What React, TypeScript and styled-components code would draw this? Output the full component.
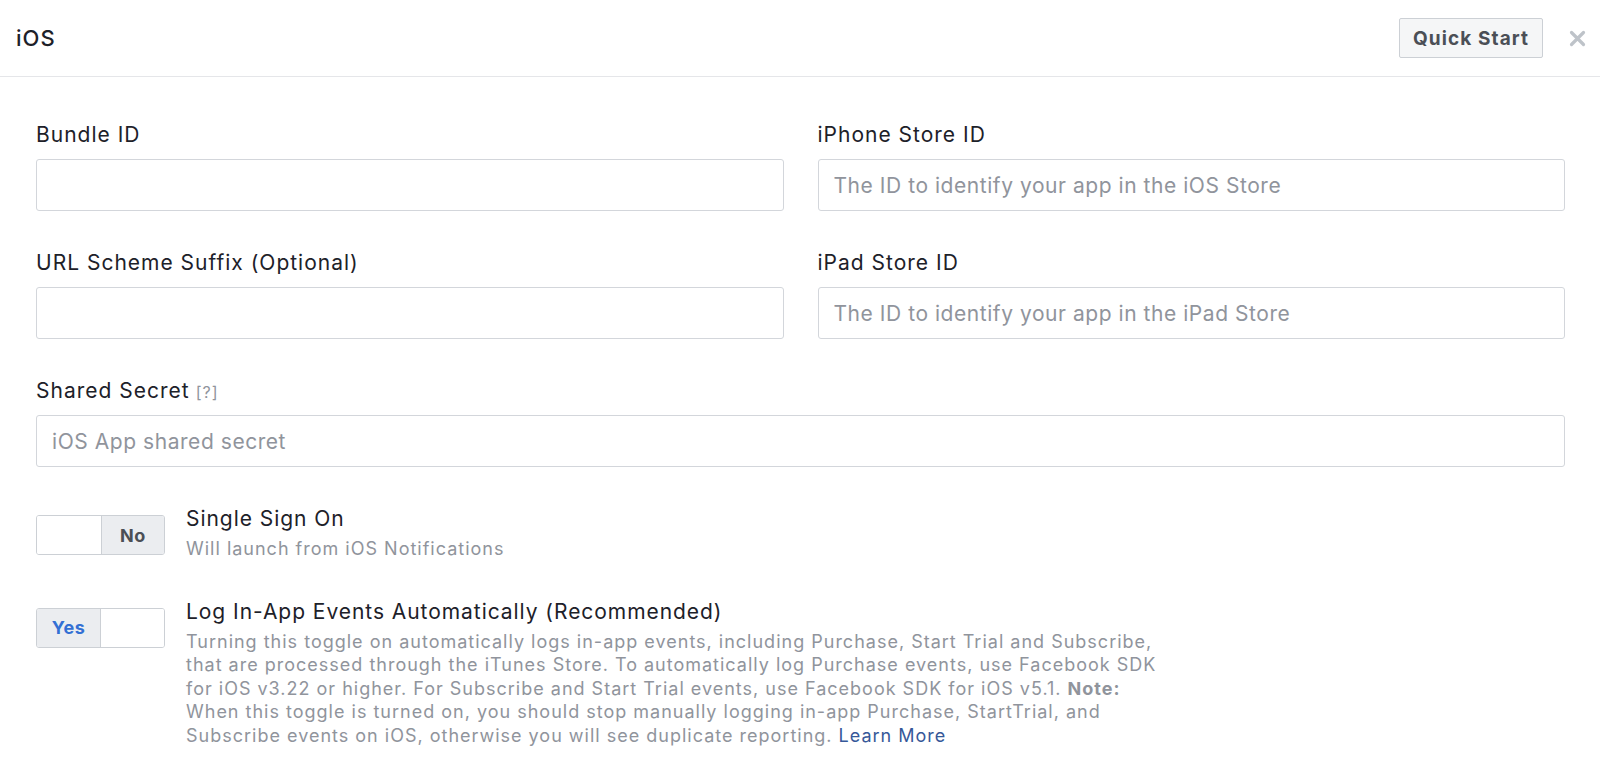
import React from 'react';
import styled, { createGlobalStyle } from 'styled-components';

const GlobalStyle = createGlobalStyle`
  html, body {
    margin: 0;
    padding: 0;
    background: #ffffff;
  }
  body {
    font-family: Inter, "Noto Sans", "Liberation Sans", sans-serif;
    color: #1d2129;
    -webkit-font-smoothing: antialiased;
  }
  * {
    box-sizing: border-box;
  }
`;

const Panel = styled.div`
  width: 1600px;
  min-height: 781px;
  background: #ffffff;
`;

const Header = styled.header`
  height: 77px;
  display: flex;
  align-items: center;
  justify-content: space-between;
  padding: 0 14px 0 16px;
  border-bottom: 1px solid #e5e6e9;
`;

const Title = styled.h2`
  margin: 0;
  font-size: 22px;
  font-weight: 500;
  letter-spacing: 1px;
  color: #1d2129;
`;

const HeaderActions = styled.div`
  display: flex;
  align-items: center;
  gap: 26px;
`;

const QuickStartButton = styled.button`
  height: 40px;
  width: 144px;
  padding: 0;
  border: 1px solid #ccd0d5;
  border-radius: 2px;
  background: #f5f6f7;
  font-family: inherit;
  font-size: 19px;
  font-weight: 700;
  letter-spacing: 1.1px;
  color: #4b4f56;
  cursor: pointer;
`;

const CloseButton = styled.button`
  border: 0;
  padding: 0;
  background: none;
  display: flex;
  cursor: pointer;
`;

const Body = styled.div`
  padding: 46px 35px 0 36px;
`;

const FieldGrid = styled.div`
  display: grid;
  grid-template-columns: 1fr 1fr;
  column-gap: 34px;
  row-gap: 40px;
`;

const Field = styled.div<{ $wide?: boolean }>`
  display: flex;
  flex-direction: column;
  gap: 12px;
  grid-column: ${(p) => (p.$wide ? '1 / -1' : 'auto')};
`;

const Label = styled.label`
  display: block;
  height: 24px;
  font-size: 21px;
  line-height: 24px;
  letter-spacing: 1px;
  color: #1d2129;
`;

const Hint = styled.span`
  font-size: 16px;
  line-height: 1;
  letter-spacing: 1px;
  color: #90949c;
  margin-left: 6px;
`;

const TextInput = styled.input`
  height: 52px;
  width: 100%;
  border: 1px solid #d3d6db;
  border-radius: 3px;
  padding: 0 15px;
  font-family: inherit;
  font-size: 21px;
  letter-spacing: 0.55px;
  color: #1d2129;
  outline: none;

  &::placeholder {
    color: #90949c;
  }
`;

const ToggleList = styled.div`
  display: flex;
  flex-direction: column;
  gap: 39px;
  margin-top: 40px;
`;

const ToggleRow = styled.div`
  display: flex;
  align-items: flex-start;
  gap: 21px;
`;

const Switch = styled.div`
  margin-top: 8px;
  width: 129px;
  height: 40px;
  display: flex;
  border: 1px solid #ccd0d5;
  border-radius: 3px;
  overflow: hidden;
  flex-shrink: 0;
`;

const SwitchHalf = styled.span<{ $active?: boolean; $on?: boolean }>`
  flex: ${(p) => (p.$active ? '0 0 63px' : '1')};
  display: flex;
  align-items: center;
  justify-content: center;
  background: ${(p) => (p.$active ? '#ebedf0' : '#ffffff')};
  color: ${(p) => (p.$on ? '#3370d4' : '#4b4f56')};
  font-size: 18px;
  font-weight: 700;
  letter-spacing: 0.5px;

  & + & {
    border-left: 1px solid #ccd0d5;
  }
`;

const ToggleText = styled.div`
  display: flex;
  flex-direction: column;
`;

const ToggleTitle = styled.div`
  font-size: 21px;
  line-height: 24px;
  letter-spacing: 0.95px;
  color: #1d2129;
`;

const ToggleDesc = styled.p`
  margin: 6px 0 0;
  font-size: 18px;
  line-height: 23.5px;
  letter-spacing: 1px;
  white-space: nowrap;
  color: #90949c;

  strong {
    font-weight: 700;
  }
`;

const LearnMore = styled.a`
  color: #365899;
  text-decoration: none;
`;

const CloseIcon = () => (
  <svg width="17" height="17" viewBox="0 0 17 17">
    <path d="M2.5 2.5 L14.5 14.5 M14.5 2.5 L2.5 14.5" stroke="#bec3c9" strokeWidth="3.2" strokeLinecap="round" />
  </svg>
);

type ToggleProps = { on: boolean };

const Toggle = ({ on }: ToggleProps) =>
  on ? (
    <Switch>
      <SwitchHalf $active $on>
        Yes
      </SwitchHalf>
      <SwitchHalf />
    </Switch>
  ) : (
    <Switch>
      <SwitchHalf />
      <SwitchHalf $active>No</SwitchHalf>
    </Switch>
  );

export default function App() {
  return (
    <Panel>
      <GlobalStyle />
      <Header>
        <Title>iOS</Title>
        <HeaderActions>
          <QuickStartButton>Quick Start</QuickStartButton>
          <CloseButton aria-label="Close">
            <CloseIcon />
          </CloseButton>
        </HeaderActions>
      </Header>

      <Body>
        <FieldGrid>
          <Field>
            <Label>Bundle ID</Label>
            <TextInput />
          </Field>
          <Field>
            <Label>iPhone Store ID</Label>
            <TextInput placeholder="The ID to identify your app in the iOS Store" />
          </Field>
          <Field>
            <Label>URL Scheme Suffix (Optional)</Label>
            <TextInput />
          </Field>
          <Field>
            <Label>iPad Store ID</Label>
            <TextInput placeholder="The ID to identify your app in the iPad Store" />
          </Field>
          <Field $wide>
            <Label>
              Shared Secret<Hint>[?]</Hint>
            </Label>
            <TextInput placeholder="iOS App shared secret" />
          </Field>
        </FieldGrid>

        <ToggleList>
          <ToggleRow>
            <Toggle on={false} />
            <ToggleText>
              <ToggleTitle>Single Sign On</ToggleTitle>
              <ToggleDesc>Will launch from iOS Notifications</ToggleDesc>
            </ToggleText>
          </ToggleRow>
          <ToggleRow>
            <Toggle on />
            <ToggleText>
              <ToggleTitle>Log In-App Events Automatically (Recommended)</ToggleTitle>
              <ToggleDesc>
                Turning this toggle on automatically logs in-app events, including Purchase, Start Trial and Subscribe,
                <br />
                that are processed through the iTunes Store. To automatically log Purchase events, use Facebook SDK
                <br />
                for iOS v3.22 or higher. For Subscribe and Start Trial events, use Facebook SDK for iOS v5.1.{' '}
                <strong>Note:</strong>
                <br />
                When this toggle is turned on, you should stop manually logging in-app Purchase, StartTrial, and
                <br />
                Subscribe events on iOS, otherwise you will see duplicate reporting.{' '}
                <LearnMore href="#">Learn More</LearnMore>
              </ToggleDesc>
            </ToggleText>
          </ToggleRow>
        </ToggleList>
      </Body>
    </Panel>
  );
}
